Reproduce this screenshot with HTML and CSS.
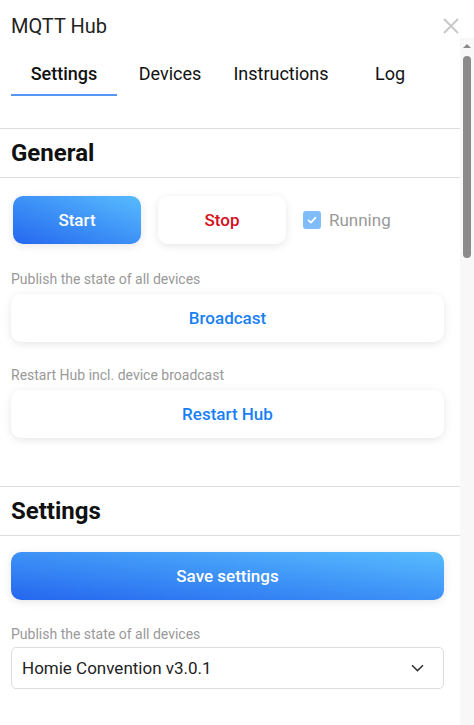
FILE: index.html
```html
<!DOCTYPE html>
<html>
<head>
<meta charset="utf-8">
<link rel="stylesheet" href="styles.css">
</head>
<body>
<div class="app">
  <header class="header">
    <div class="title">MQTT Hub</div>
    <svg class="close" width="16" height="16" viewBox="0 0 16 16"><path d="M1 1L15 15M15 1L1 15" stroke="#c8c8c8" stroke-width="2" fill="none"/></svg>
  </header>
  <div class="body">
    <main class="content">
      <nav class="tabs">
        <div class="tab tab-settings active">Settings</div>
        <div class="tab tab-devices">Devices</div>
        <div class="tab tab-instr">Instructions</div>
        <div class="tab tab-log">Log</div>
      </nav>
      <h2 class="section-title">General</h2>
      <div class="section">
        <div class="run-row">
          <button class="btn btn-primary btn-small">Start</button>
          <button class="btn btn-white btn-small btn-stop">Stop</button>
          <label class="check">
            <span class="box"><svg width="12" height="12" viewBox="0 0 12 12"><path d="M2.5 6.3L5 8.6L9.5 3.6" stroke="#fff" stroke-width="1.6" fill="none" stroke-linecap="round" stroke-linejoin="round"/></svg></span>
            <span class="check-label">Running</span>
          </label>
        </div>
        <div class="field">
          <div class="label">Publish the state of all devices</div>
          <button class="btn btn-white btn-wide btn-link">Broadcast</button>
        </div>
        <div class="field">
          <div class="label">Restart Hub incl. device broadcast</div>
          <button class="btn btn-white btn-wide btn-link">Restart Hub</button>
        </div>
      </div>
      <h2 class="section-title">Settings</h2>
      <div class="section section-settings">
        <button class="btn btn-primary btn-wide">Save settings</button>
        <div class="field field-select">
          <div class="label label-select">Publish the state of all devices</div>
          <div class="select">
            <span>Homie Convention v3.0.1</span>
            <svg width="13" height="8" viewBox="0 0 13 8"><path d="M1 1.2L6.5 6.6L12 1.2" stroke="#333" stroke-width="1.5" fill="none"/></svg>
          </div>
        </div>
      </div>
    </main>
    <div class="scrollbar">
      <div class="arrow"></div>
      <div class="thumb"></div>
    </div>
  </div>
</div>
</body>
</html>
```

FILE: styles.css
```css
* { box-sizing: border-box; }
html, body { margin: 0; padding: 0; background: #fff; }
body {
  font-family: Roboto, "Liberation Sans", sans-serif;
  width: 474px;
  height: 725px;
  overflow: hidden;
}
.app { display: flex; flex-direction: column; height: 725px; }
.header {
  height: 38px;
  display: flex;
  align-items: flex-start;
  justify-content: space-between;
  padding: 0 15px 0 11px;
}
.title {
  font-size: 20px;
  color: #222;
  line-height: 24px;
  margin-top: 14px;
}
.close { margin-top: 18px; }
.body { flex: 1; display: flex; min-height: 0; }
.content { width: 460px; }
.scrollbar {
  width: 14px;
  background: #f8f8f8;
  display: flex;
  flex-direction: column;
  align-items: center;
}
.arrow {
  margin-top: 6px;
  width: 0; height: 0;
  border-left: 4px solid transparent;
  border-right: 4px solid transparent;
  border-bottom: 4px solid #8b8b8b;
}
.thumb {
  margin-top: 8px;
  width: 8px;
  height: 202px;
  border-radius: 4px;
  background: #8b8b8b;
}
.tabs {
  display: flex;
  padding: 16px 0 0 11px;
  margin-bottom: 32px;
}
.tab {
  font-size: 18px;
  line-height: 24px;
  color: #111;
  text-align: center;
  padding: 8px 0;
  border-bottom: 2px solid transparent;
}
.tab.active { font-weight: 500; border-bottom-color: #5596f4; }
.tab-settings { width: 106px; }
.tab-devices { width: 106px; }
.tab-instr { width: 116px; }
.tab-log { width: 102px; }
.section-title {
  margin: 0;
  height: 50px;
  border-top: 1px solid #ddd;
  border-bottom: 1px solid #ddd;
  font-size: 24px;
  font-weight: 700;
  line-height: 48px;
  color: #111;
  padding: 0 11px;
}
.section { padding: 18px 16px 48px 11px; }
.section-settings { padding-top: 16px; }
.run-row { display: flex; align-items: center; }
.btn {
  font-family: Roboto, "Liberation Sans", sans-serif;
  font-size: 17px;
  font-weight: 500;
  height: 48px;
  border: 0;
  border-radius: 10px;
  cursor: pointer;
  box-shadow: 0 2px 9px rgba(0, 0, 0, 0.1);
}
.btn-small { width: 128px; }
.btn-primary {
  color: #fff;
  background: linear-gradient(to top right, #2467ef, #57bcfe);
}
.run-row .btn-primary { margin-left: 2px; }
.btn-white { background: #fff; }
.btn-stop { color: #d3101c; margin-left: 17px; }
.btn-wide { width: 433px; display: block; }
.btn-link { color: #1a7ff5; }
.check { display: flex; align-items: center; margin-left: 17px; }
.box {
  width: 18px;
  height: 18px;
  border-radius: 3px;
  background: #7fbcfb;
  display: flex;
  align-items: center;
  justify-content: center;
}
.check-label { color: #999; font-size: 17px; margin-left: 8px; }
.field { margin-top: 25px; }
.field + .field { margin-top: 23px; }
.label {
  font-size: 14px;
  line-height: 20px;
  color: #999;
  margin-bottom: 5px;
}
.field-select { margin-top: 24px; }
.label-select { margin-bottom: 3px; }
.select {
  width: 433px;
  height: 42px;
  border: 1px solid #ddd;
  border-radius: 5px;
  display: flex;
  align-items: center;
  justify-content: space-between;
  padding: 0 19px 0 10px;
  font-size: 17px;
  color: #222;
}
```
